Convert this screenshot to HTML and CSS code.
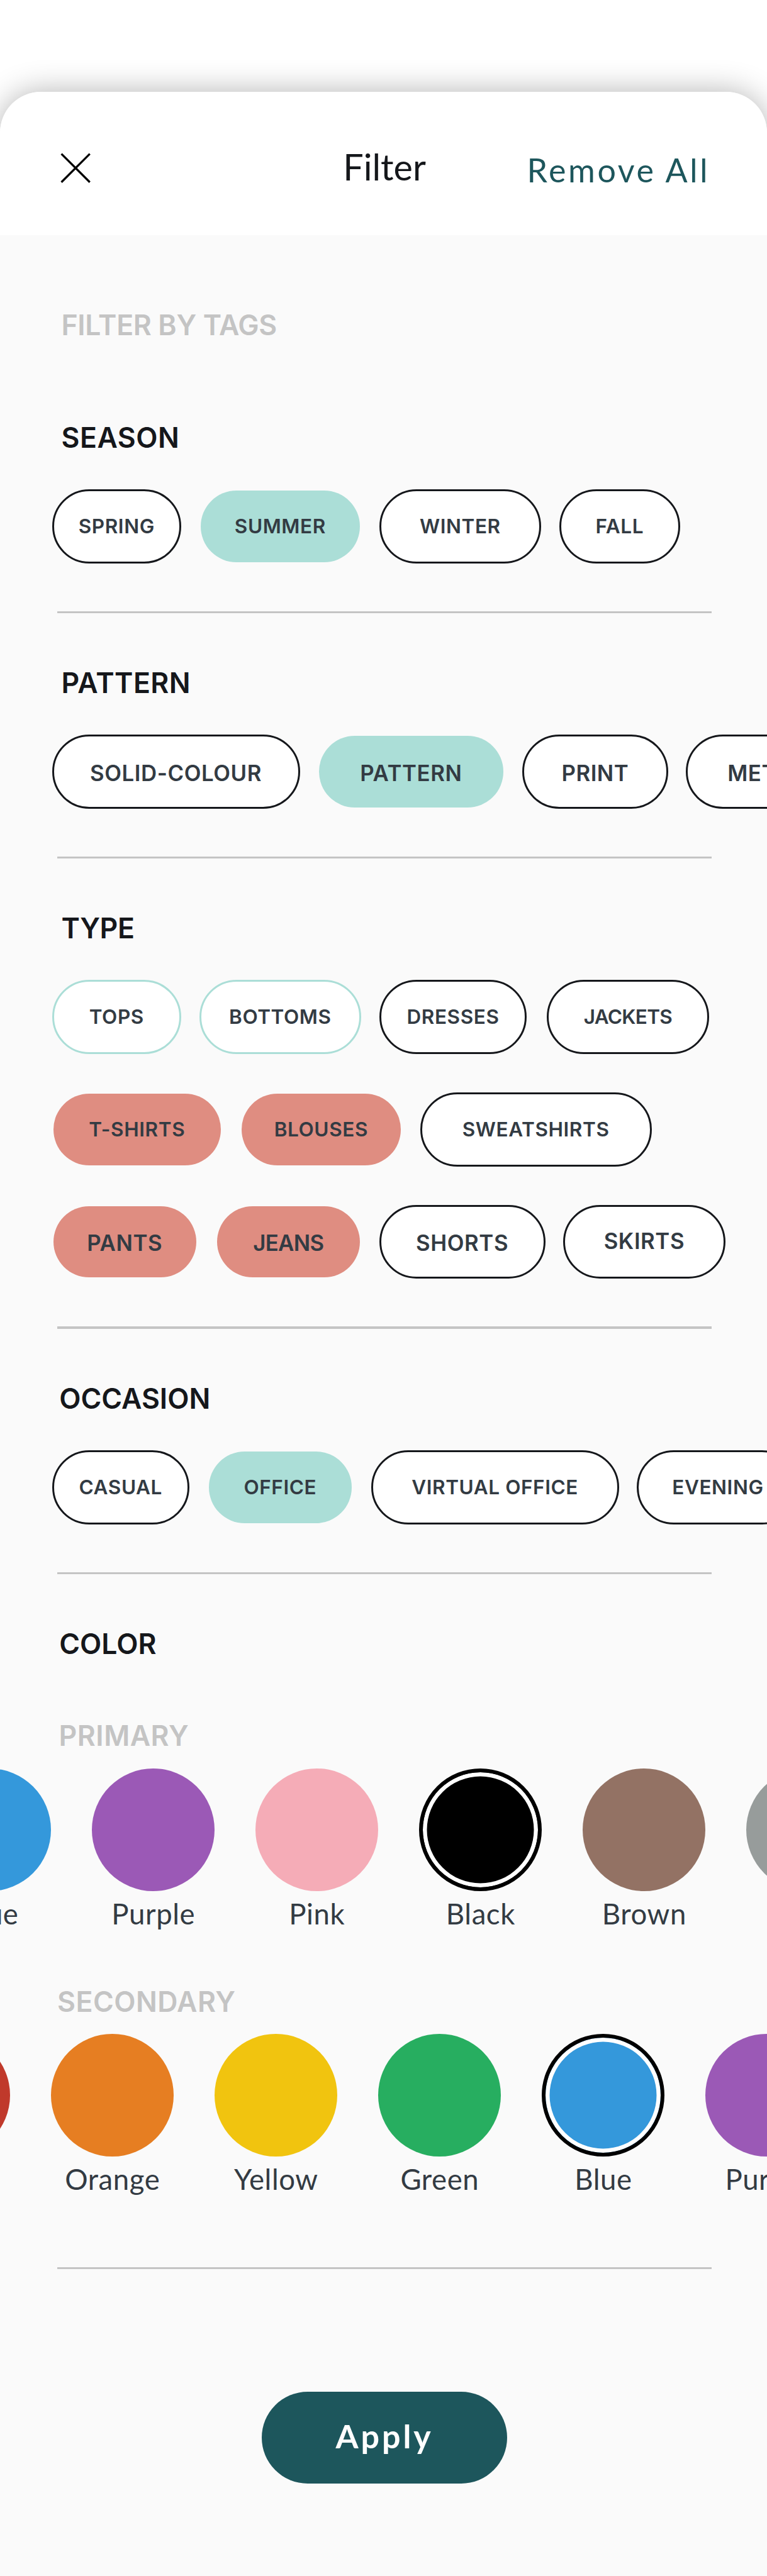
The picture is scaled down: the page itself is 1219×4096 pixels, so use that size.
FILE: index.html
```
<!DOCTYPE html>
<html lang="en">
<head>
    <meta charset="UTF-8">
    <title>Filter</title>
    <link rel="stylesheet" href="styles.css">
</head>
<body>
    <div class="sheet">
        <header class="header">
            <svg class="close" viewBox="0 0 16 16">
                <path d="M1.1 1.1L15 15M15 1.1L1.1 15" fill="none" stroke="#000" stroke-width="1"/>
            </svg>
            <h1>Filter</h1>
            <a class="remove">Remove All</a>
        </header>

        <main>
            <h2 class="caption tags-title">FILTER BY TAGS</h2>

            <section class="group">
                <h3>SEASON</h3>
                <div class="chips">
                    <button class="chip w62">SPRING</button>
                    <button class="chip w78 selected">SUMMER</button>
                    <button class="chip w78">WINTER</button>
                    <button class="chip w58">FALL</button>
                </div>
            </section>

            <section class="group">
                <h3>PATTERN</h3>
                <div class="chips">
                    <button class="chip big w120">SOLID-COLOUR</button>
                    <button class="chip big w90 selected">PATTERN</button>
                    <button class="chip big w70">PRINT</button>
                    <button class="chip big w94">METALLIC</button>
                </div>
            </section>

            <section class="group">
                <h3 class="narrow">TYPE</h3>
                <div class="chips">
                    <button class="chip w62 open">TOPS</button>
                    <button class="chip w78 open">BOTTOMS</button>
                    <button class="chip w71">DRESSES</button>
                    <button class="chip w78 tight push">JACKETS</button>
                </div>
                <div class="chips">
                    <button class="chip w82 sub">T-SHIRTS</button>
                    <button class="chip w78 sub">BLOUSES</button>
                    <button class="chip w112">SWEATSHIRTS</button>
                </div>
                <div class="chips">
                    <button class="chip big w70 sub">PANTS</button>
                    <button class="chip big w70 sub tight">JEANS</button>
                    <button class="chip big w80">SHORTS</button>
                    <button class="chip big w78 raised">SKIRTS</button>
                </div>
            </section>

            <section class="group">
                <h3 class="near">OCCASION</h3>
                <div class="chips">
                    <button class="chip w66">CASUAL</button>
                    <button class="chip w70 selected">OFFICE</button>
                    <button class="chip w120">VIRTUAL OFFICE</button>
                    <button class="chip w78">EVENING</button>
                </div>
            </section>

            <section class="group colors">
                <h3 class="near">COLOR</h3>
                <h4 class="caption primary-title">PRIMARY</h4>
                <div class="swatches primary">
                    <div class="swatch"><i class="dot blue"></i>Blue</div>
                    <div class="swatch"><i class="dot purple"></i>Purple</div>
                    <div class="swatch"><i class="dot pink"></i>Pink</div>
                    <div class="swatch"><i class="dot black picked"></i>Black</div>
                    <div class="swatch"><i class="dot brown"></i>Brown</div>
                    <div class="swatch"><i class="dot grey"></i></div>
                </div>
                <h4 class="caption secondary-title">SECONDARY</h4>
                <div class="swatches secondary">
                    <div class="swatch"><i class="dot red"></i></div>
                    <div class="swatch"><i class="dot orange"></i>Orange</div>
                    <div class="swatch"><i class="dot yellow"></i>Yellow</div>
                    <div class="swatch"><i class="dot green"></i>Green</div>
                    <div class="swatch"><i class="dot blue picked"></i>Blue</div>
                    <div class="swatch"><i class="dot purple"></i>Purple</div>
                </div>
            </section>

            <button class="apply">Apply</button>
        </main>
    </div>
</body>
</html>
```
FILE: styles.css
```
/* 1rem = 10 units of a 375 wide screen */
html {
    font-size: calc(100vw / 37.5);
    background: white;
}
* {
    box-sizing: border-box;
}
body {
    margin: 0;
    padding-top: 4.5rem;
    height: 126rem;
    overflow: hidden;
    font-family: Lato, "Open Sans", sans-serif;
    color: #333b43;
}
h1, h2, h3, h4 {
    margin: 0;
}
button {
    border: none;
    padding: 0;
    cursor: pointer;
}
.sheet {
    height: 121.5rem;
    background: #fafafa;
    border-radius: 2rem 2rem 0 0;
    box-shadow: 0 0 1.5rem rgba(0, 0, 0, 0.3);
}

.header {
    display: grid;
    grid-template-columns: 1fr auto 1fr;
    align-items: center;
    height: 7rem;
    padding: 0.4rem 2.8rem 0 2.9rem;
    background: white;
    border-radius: 2rem 2rem 0 0;
}
.close {
    width: 1.6rem;
    height: 1.6rem;
}
.header h1 {
    font-size: 1.77rem;
    font-weight: 400;
    line-height: 2.4rem;
    margin-top: -0.12rem;
    color: #15171b;
}
.remove {
    justify-self: end;
    font-size: 1.6rem;
    line-height: 2.4rem;
    letter-spacing: 0.11rem;
    padding-top: 0.22rem;
    color: #1d565c;
}

main {
    padding: 3.4rem 2.7rem 0 2.8rem;
}
h3, .caption {
    font-family: Inter, "Open Sans", sans-serif;
    font-size: 1.37rem;
    font-weight: 600;
    line-height: 2.04rem;
    height: 2rem;
    letter-spacing: 0.015rem;
    white-space: nowrap;
}
h3 {
    color: #15171b;
    padding-left: 0.2rem;
    margin-bottom: 1.6rem;
}
.narrow {
    letter-spacing: -0.01rem;
}
.near {
    padding-left: 0.1rem;
    letter-spacing: 0;
}
.caption {
    color: #c4c4c4;
}
.tags-title {
    padding-left: 0.2rem;
    margin-bottom: 1.1rem;
    letter-spacing: -0.01rem;
}

.group {
    padding-top: 2.4rem;
}
.group::after {
    content: "";
    display: block;
    height: 0.1rem;
    margin-top: 2.4rem;
    background: #c4c4c4;
}
.chips {
    display: flex;
    gap: 1rem;
    margin-left: -0.2rem;
}
.chips + .chips {
    margin-top: 2rem;
}
.chip {
    flex: none;
    height: 3.5rem;
    border-radius: 1.75rem;
    background: white;
    outline: 0.1rem solid #15171b;
    outline-offset: -0.05rem;
    font: 600 0.97rem/1.4rem Inter, "Open Sans", sans-serif;
    letter-spacing: 0.018rem;
    color: #333b43;
}
.big {
    font-size: 1.07rem;
    padding-top: 0.14rem;
}
.raised {
    padding-top: 0;
    padding-bottom: 0.06rem;
}
.tight {
    letter-spacing: -0.02rem;
}
.push {
    margin-left: 0.1rem;
}
.selected {
    background: #abded7;
    outline: none;
}
.open {
    outline-color: #abded7;
}
.sub {
    background: #df8d81;
    outline: none;
}
.w58 { width: 5.8rem; }
.w62 { width: 6.2rem; }
.w66 { width: 6.6rem; }
.w70 { width: 7rem; }
.w71 { width: 7.1rem; }
.w78 { width: 7.8rem; }
.w80 { width: 8rem; }
.w82 { width: 8.2rem; }
.w90 { width: 9rem; }
.w94 { width: 9.4rem; }
.w112 { width: 11.2rem; }
.w120 { width: 12rem; }

.colors h3 {
    margin-bottom: 2.5rem;
}
.primary-title {
    padding-left: 0.08rem;
    margin-bottom: 0.6rem;
}
.secondary-title {
    margin: 2.3rem 0 0.6rem;
}
.swatches {
    display: flex;
    gap: 2rem;
}
.primary {
    margin-left: -6.3rem;
}
.secondary {
    margin-left: -8.3rem;
}
.swatch {
    flex: none;
    width: 6rem;
    height: 8.1rem;
    font-size: 1.4rem;
    line-height: 2rem;
    letter-spacing: 0.018rem;
    text-align: center;
}
.dot {
    display: block;
    height: 6rem;
    margin-bottom: 0.1rem;
    border-radius: 50%;
}
.picked {
    border: 0.2rem solid black;
    box-shadow: inset 0 0 0 0.2rem white;
}
.red { background: #c0392b; }
.orange { background: #e67e22; }
.yellow { background: #f1c40f; }
.green { background: #27ae60; }
.blue { background: #3498db; }
.purple { background: #9b59b6; }
.pink { background: #f5acb7; }
.black { background: black; }
.brown { background: #937264; }
.grey { background: #979c9b; }
.colors::after {
    margin-top: 3.3rem;
}

.apply {
    display: block;
    width: 12rem;
    height: 4.5rem;
    margin: 6rem 0 0 10rem;
    padding-bottom: 0.15rem;
    border-radius: 2.25rem;
    background: #1d565c;
    color: white;
    font: 700 1.6rem/2rem Lato, "Open Sans", sans-serif;
    letter-spacing: 0.12rem;
}
```
